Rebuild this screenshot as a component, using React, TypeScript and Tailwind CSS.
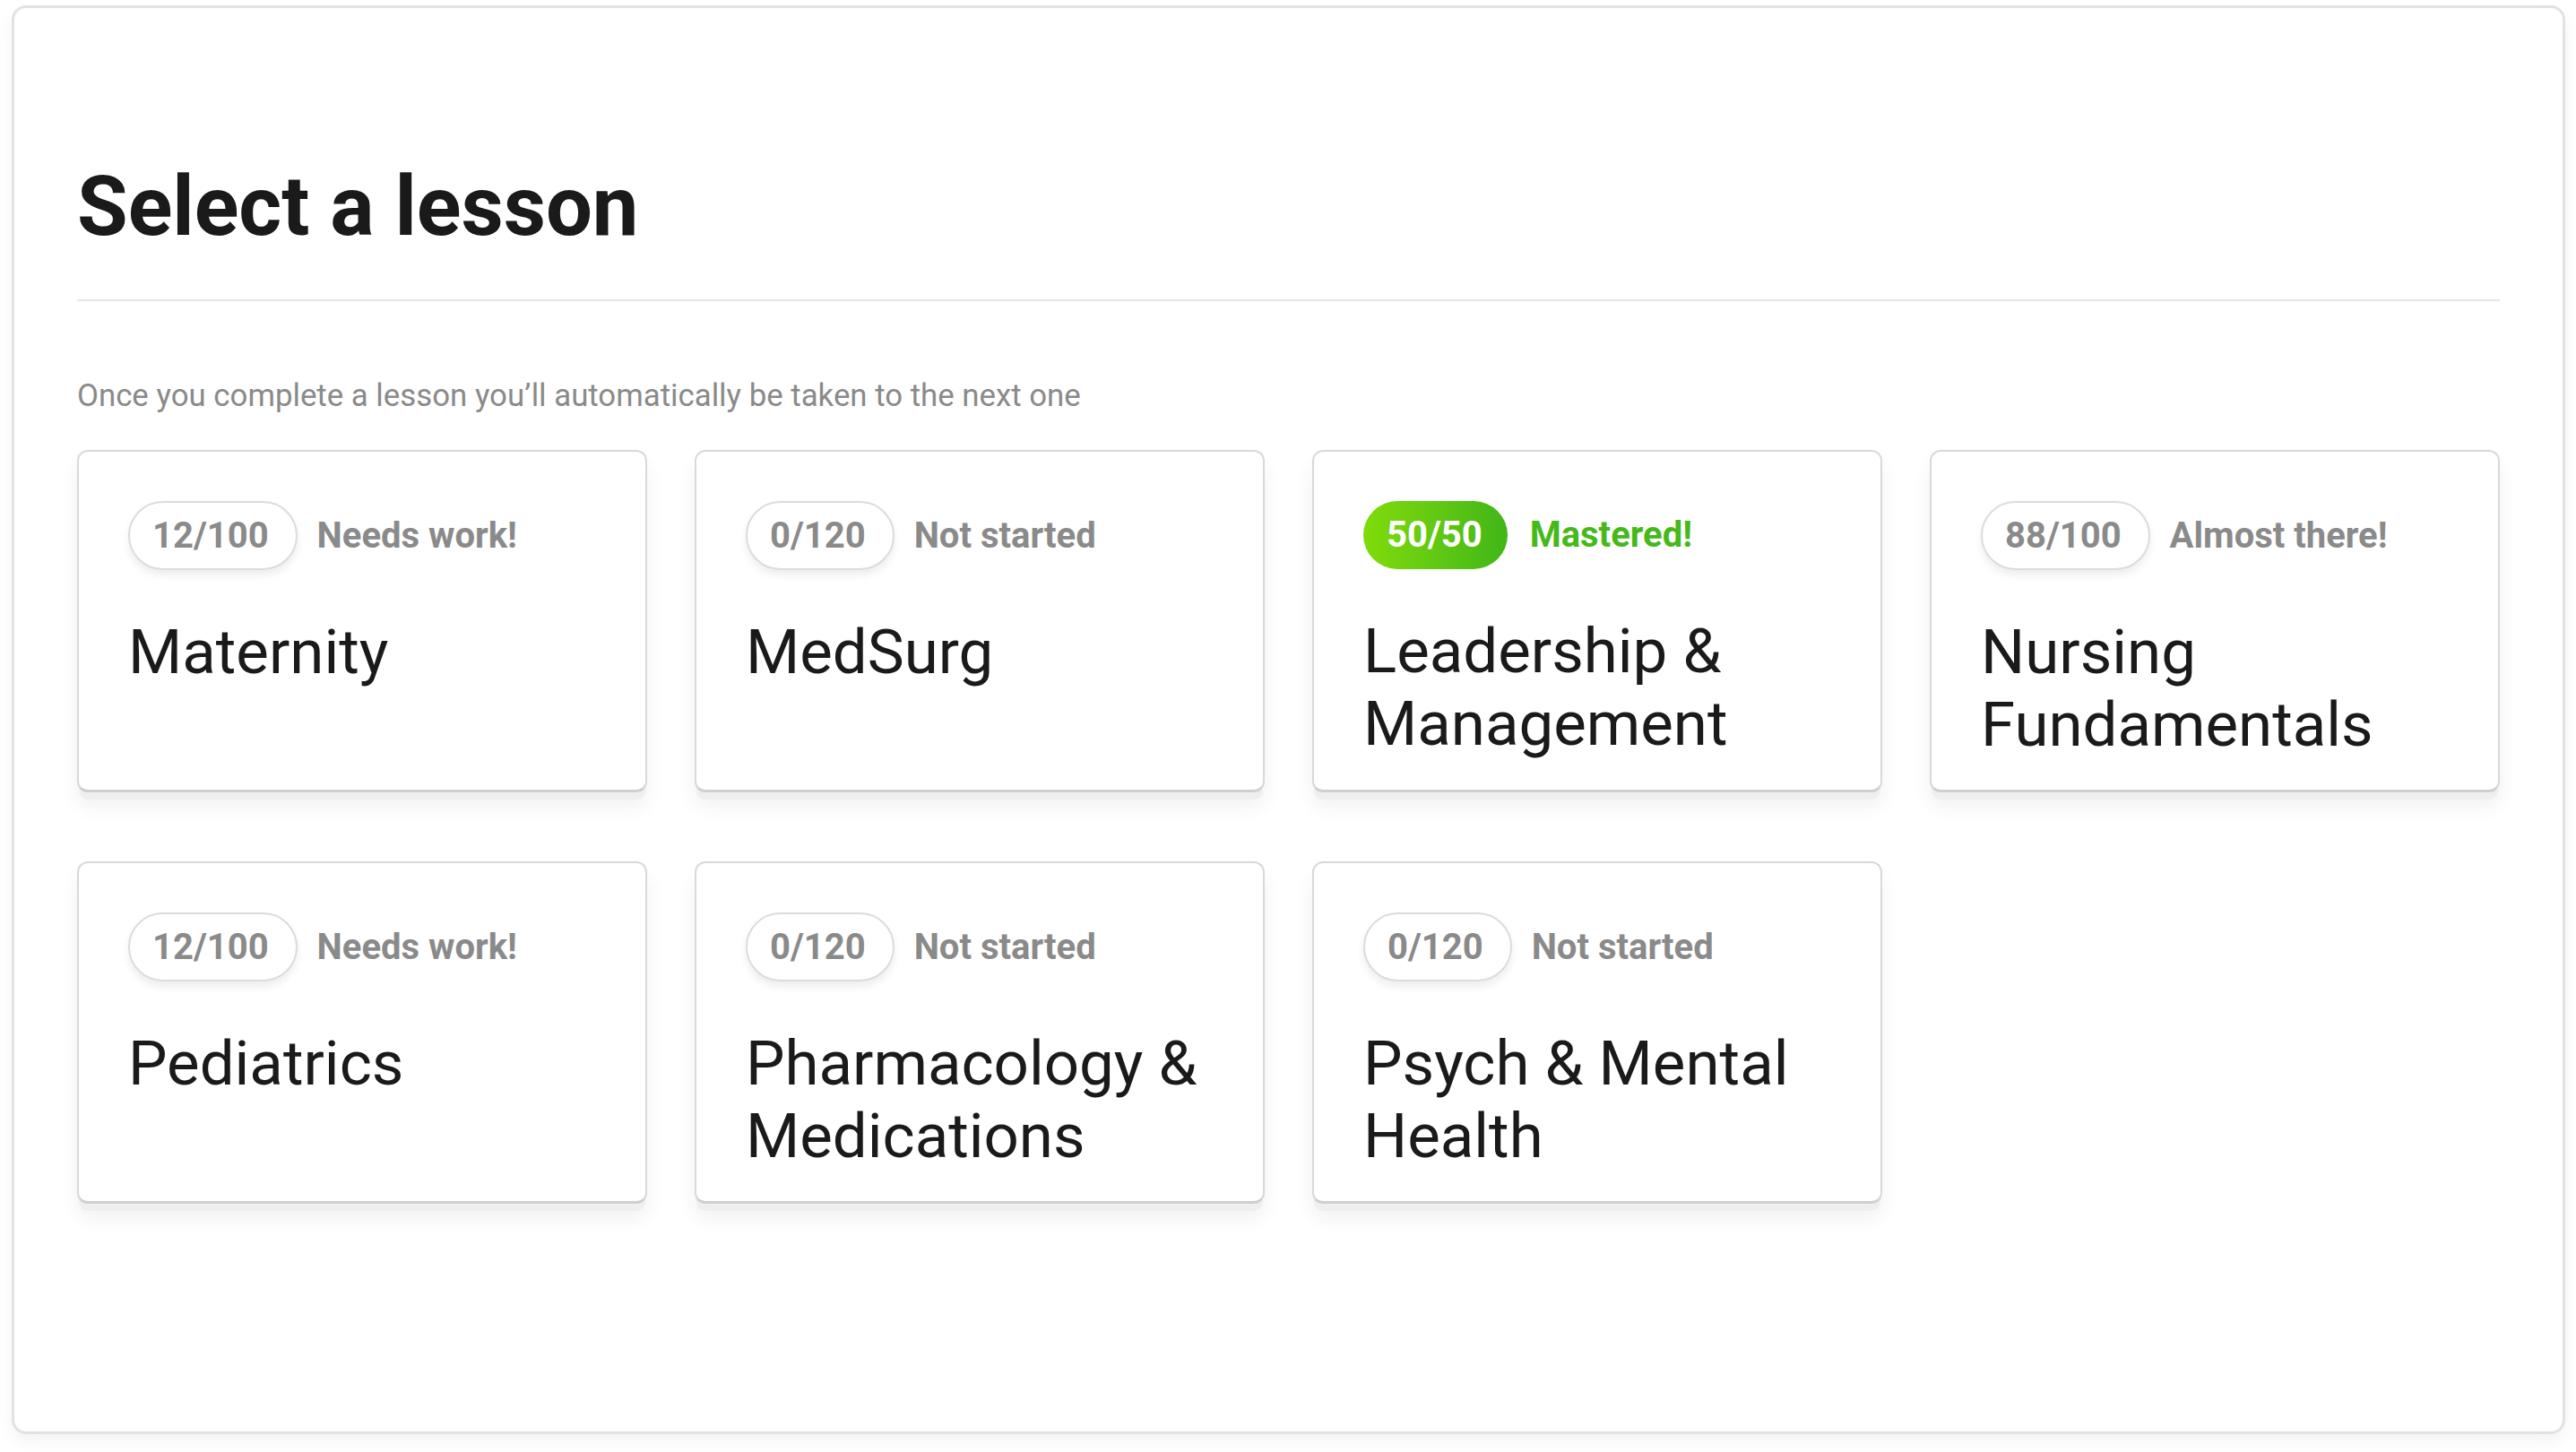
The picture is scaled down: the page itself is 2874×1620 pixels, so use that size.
import React from 'react'

type Lesson = {
  score: string
  status: string
  title: string[]
  mastered?: boolean
}

const lessons: Lesson[] = [
  { score: '12/100', status: 'Needs work!', title: ['Maternity'] },
  { score: '0/120', status: 'Not started', title: ['MedSurg'] },
  { score: '50/50', status: 'Mastered!', title: ['Leadership &', 'Management'], mastered: true },
  { score: '88/100', status: 'Almost there!', title: ['Nursing', 'Fundamentals'] },
  { score: '12/100', status: 'Needs work!', title: ['Pediatrics'] },
  { score: '0/120', status: 'Not started', title: ['Pharmacology &', 'Medications'] },
  { score: '0/120', status: 'Not started', title: ['Psych & Mental', 'Health'] },
]

function LessonCard({ lesson }: { lesson: Lesson }) {
  return (
    <div className="h-[382px] rounded-[12px] border-2 border-b-[3px] border-[#d9d9d9] border-b-[#cfcfcf] bg-white p-[55px] shadow-[0_10px_0_-2px_#efefef,0_16px_22px_rgba(0,0,0,0.06)]">
      <div className="flex items-center">
        {lesson.mastered ? (
          <span className="flex h-[76px] items-center rounded-full bg-gradient-to-r from-[#80dc09] to-[#3fb617] pl-[26px] pr-[28px] text-[40px] font-bold text-white">
            {lesson.score}
          </span>
        ) : (
          <span className="flex h-[77px] items-center rounded-full border-2 border-[#dcdcdc] bg-white pl-[25px] pr-[30px] text-[40px] font-bold text-[#8a8a8a] shadow-[0_6px_10px_rgba(0,0,0,0.07)]">
            {lesson.score}
          </span>
        )}
        <span
          className={
            lesson.mastered
              ? 'ml-[25px] text-[40px] font-bold text-[#46b91a]'
              : 'ml-[22px] text-[40px] font-bold text-[#8a8a8a]'
          }
        >
          {lesson.status}
        </span>
      </div>
      <h2 className="mt-[51px] whitespace-nowrap text-[69px] font-normal leading-[81px] text-[#1a1a1a]">
        {lesson.title.map((line, i) => (
          <div key={i}>{line}</div>
        ))}
      </h2>
    </div>
  )
}

export default function App() {
  return (
    <div className="h-[1620px] w-[2874px] bg-white pl-[13px] pr-[12px] pt-[6px]" style={{ fontFamily: 'Roboto, "Noto Sans", sans-serif' }}>
      <div className="h-[1594px] rounded-[16px] border-[3px] border-[#e2e2e2] bg-white px-[70px] pt-[176px] shadow-[0_8px_18px_rgba(0,0,0,0.05)]">
        <h1 className="text-[92px] font-bold leading-[92px] text-[#1a1a1a]">Select a lesson</h1>
        <div className="mt-[57px] h-[2px] bg-[#e6e6e6]" />
        <p className="mt-[88px] text-[34.8px] leading-[35px] text-[#8a8a8a]">
          Once you complete a lesson you’ll automatically be taken to the next one
        </p>
        <div className="mt-[43px] grid grid-cols-4 gap-x-[53px] gap-y-[77px]">
          {lessons.map((lesson, i) => (
            <LessonCard key={i} lesson={lesson} />
          ))}
        </div>
      </div>
    </div>
  )
}
